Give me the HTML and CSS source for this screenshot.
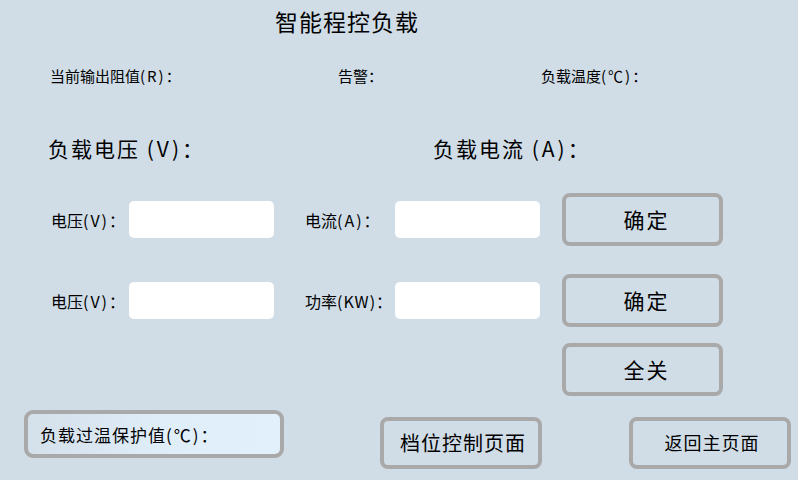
FILE: index.html
```html
<!DOCTYPE html>
<html lang="zh">
<head>
<meta charset="utf-8">
<title>智能程控负载</title>
<link rel="stylesheet" href="styles.css">
</head>
<body>
<div class="page">
  <div class="title">智能程控负载</div>
  <div class="status">
    <span>当前输出阻值<span class="hw">(R)</span>：</span>
    <span>告警：</span>
    <span>负载温度<span class="hw">(℃)</span>：</span>
  </div>
  <div class="heads">
    <span>负载电压 <span class="hw">(V)</span>：</span>
    <span>负载电流 <span class="hw">(A)</span>：</span>
  </div>
  <div class="form">
    <label class="lbl">电压<span class="hw">(V)</span>：</label>
    <div class="field"></div>
    <label class="lbl">电流<span class="hw">(A)</span>：</label>
    <div class="field"></div>
    <div class="btn">确定</div>

    <label class="lbl">电压<span class="hw">(V)</span>：</label>
    <div class="field"></div>
    <label class="lbl">功率<span class="hw hw-kw">(KW)</span>：</label>
    <div class="field"></div>
    <div class="btn">确定</div>

    <div class="span6"></div>
    <div class="btn btn-off">全关</div>
  </div>
  <div class="bottom">
    <div class="protect">负载过温保护值<span class="hw">(℃)</span>：</div>
    <div class="btn nav nav1">档位控制页面</div>
    <div class="btn nav nav2">返回主页面</div>
  </div>
</div>
</body>
</html>
```
FILE: styles.css
```css
* { box-sizing: border-box; }
html, body {
  margin: 0;
  padding: 0;
  background: #d0dde7;
}
body {
  font-family: "Noto Sans CJK SC", "Noto Sans", sans-serif;
  color: #000;
  width: 798px;
  height: 480px;
  overflow: hidden;
}
.page { width: 798px; height: 480px; }

.hw { letter-spacing: 2px; }

.title {
  height: 42px;
  line-height: 42px;
  padding-left: 275px;
  font-size: 23px;
  letter-spacing: 1px;
}

.status {
  height: 67px;
  display: grid;
  grid-template-columns: 288px 203px auto;
  align-items: center;
  padding-left: 50px;
  font-size: 15px;
}

.heads {
  height: 78px;
  display: grid;
  grid-template-columns: 385px auto;
  align-items: center;
  padding-left: 48px;
  font-size: 21px;
  letter-spacing: 2px;
}
.heads .hw { letter-spacing: 3px; }

.form {
  margin-top: 6px;
  padding-left: 51px;
  display: grid;
  grid-template-columns: 78px 145px 31px 90px 145px 22px 161px;
  grid-template-rows: 53px 53px 53px;
  row-gap: 28px;
  align-items: center;
}
.lbl { font-size: 16px; white-space: nowrap; }
.hw-kw { letter-spacing: 1px; }
.form > .lbl:nth-of-type(odd) { grid-column: 1; }
.form > .lbl:nth-of-type(even) { grid-column: 4; }
.form > .btn { grid-column: 7; }
.form > .span6 { grid-column: 1 / 7; }
.form > .btn-off { align-self: start; margin-top: -12px; }

.field {
  height: 37px;
  background: #fff;
  border-radius: 5px;
}

.btn {
  height: 53px;
  border: 4px solid #a9a9a9;
  border-radius: 8px;
  display: flex;
  align-items: center;
  justify-content: center;
  padding-left: 8px;
  padding-bottom: 2px;
  font-size: 21px;
  letter-spacing: 2px;
}

.bottom {
  margin-top: 2px;
  display: flex;
  align-items: flex-start;
  padding-left: 24px;
}
.protect {
  width: 260px;
  height: 48px;
  border: 4px solid #a9a9a9;
  border-radius: 9px;
  background: linear-gradient(to right, #d4e0ea 0%, #e0eefa 55%, #e2f0fb 100%);
  display: flex;
  align-items: center;
  padding-left: 12px;
  font-size: 17px;
  letter-spacing: 1px;
}
.nav {
  margin-top: 7px;
  height: 52px;
  width: 162px;
  padding-left: 4px;
}
.nav1 { margin-left: 96px; font-size: 20px; letter-spacing: 1px; }
.nav2 { margin-left: 87px; font-size: 18px; letter-spacing: 1px; }
```
